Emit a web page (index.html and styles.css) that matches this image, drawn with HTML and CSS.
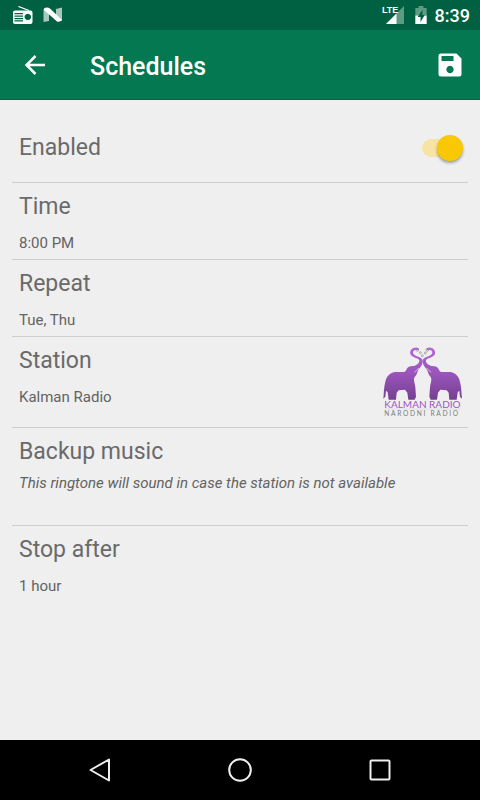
FILE: index.html
```html
<!DOCTYPE html>
<html lang="en">
<head>
<meta charset="utf-8">
<meta name="viewport" content="width=device-width, initial-scale=1">
<title>Schedules</title>
<link rel="stylesheet" href="styles.css">
</head>
<body>
<div class="status">
  <svg class="radio-icon" width="20" height="18" viewBox="0 0 20 18" aria-hidden="true">
    <path d="M5.500 .5 16 4.500" stroke="#fff" stroke-width="1.300"/>
    <path fill="#fff" fill-rule="evenodd" d="M2 4.500h15.500a2 2 0 0 1 2 2V16a2 2 0 0 1-2 2H2a2 2 0 0 1-2-2V6.500a2 2 0 0 1 2-2ZM1.500 7v1.200h8.500V7ZM1.500 9.500v1.200h8.500V9.500ZM1.500 12v1.200h8.500V12ZM1.500 14.300v1.200h8.500v-1.200ZM14.800 7.700a3.200 3.200 0 1 0 .01 0Z"/>
  </svg>
  <svg width="20" height="16" viewBox="0 0 20 16" aria-hidden="true">
    <path fill="#fff" opacity=".65" d="M.5 2 6 4v10L.5 15ZM13 2l6-1.500V14l-6-2Z"/>
    <path fill="#fff" d="M1 1.500Q4-.5 7 1.500L19 13q-2 2.500-5 1.500L1 3Z"/>
  </svg>
  <span class="spacer"></span>
  <svg width="24" height="20" viewBox="0 0 24 20" aria-hidden="true">
    <path fill="#5d9b83" d="M23 1v18H5Z"/>
    <path fill="#fff" d="M15.500 8.500V19H5Z"/>
    <path fill="#006142" d="M0 0h13v9H0Z"/>
    <text class="lte" x="1" y="8">LTE</text>
  </svg>
  <svg class="battery-icon" width="12" height="18" viewBox="0 0 12 19" aria-hidden="true">
    <path fill="#5d9b83" d="M3.500 0h5v2H12v8H0V2h3.500Z"/>
    <path fill="#fff" d="M0 10h12v9H0Z"/>
    <path fill="#006142" d="M7.500 4 2.500 11.500h3V17l4.500-7.500H7.500Z"/>
  </svg>
  <span class="clock">8:39</span>
</div>
<header class="bar">
  <button class="icon-button" aria-label="Back">
    <svg width="20" height="20" viewBox="0 0 20 20"><path d="M20 10H2M10.500 1 1.500 10l9 9" fill="none" stroke="#fff" stroke-width="2.500"/></svg>
  </button>
  <h1>Schedules</h1>
  <button class="icon-button" aria-label="Save">
    <svg width="24" height="24" viewBox="0 0 24 24"><path fill="#fff" fill-rule="evenodd" d="M3 .5h15.500L23.500 5.500V21a2.500 2.500 0 0 1-2.500 2.500H3A2.500 2.500 0 0 1 .5 21V3A2.500 2.500 0 0 1 3 .5ZM3.500 3v5h12V3ZM12 12.800a3.700 3.700 0 1 0 .01 0Z"/></svg>
  </button>
</header>
<main>
  <section class="row enabled">
    <label class="title" for="enabled">Enabled</label>
    <input class="switch" id="enabled" type="checkbox" role="switch" checked>
  </section>
  <section class="row">
    <div><h2 class="title">Time</h2><p>8:00 PM</p></div>
  </section>
  <section class="row">
    <div><h2 class="title">Repeat</h2><p>Tue, Thu</p></div>
  </section>
  <section class="row station">
    <div><h2 class="title">Station</h2><p>Kalman Radio</p></div>
    <svg class="logo" width="80" height="72" viewBox="21 18 240 216" role="img" aria-label="Kalman Radio, Narodni Radio">
      <defs>
        <linearGradient id="skin" x1="0" y1="0" x2="0" y2="1">
          <stop offset="0" stop-color="#b565d8"/><stop offset=".5" stop-color="#9a55ba"/><stop offset="1" stop-color="#744091"/>
        </linearGradient>
        <g id="elephant">
          <path fill="url(#skin)" d="M22 176C24 162 23 142 28 126C31 108 43 98 58 96C68 95 76 97 84 96C91 94 91 84 99 80C106 77 113 80 119 76C127 72 131 67 130 61C128 54 108 53 103 42C100 28 114 18 128 24L128 31C116 27 108 33 112 41C117 50 138 49 140 62C141 77 128 84 125 94C123 102 121 107 116 111C111 119 117 130 118 142L120 170L116 179H97L94 158L87 149L68 151L62 158L60 179H38L35 157L30 152L28 170Z"/>
          <path fill="none" stroke="#efefef" stroke-width="2" d="M115 97Q123 91 128 84"/>
        </g>
      </defs>
      <use href="#elephant"/>
      <use href="#elephant" transform="matrix(-1 0 0 1 280 0)"/>
      <g fill="none" stroke="#8d8d8d" stroke-width="2"><circle cx="124" cy="30" r="4"/><circle cx="133" cy="38" r="3"/><circle cx="139" cy="47" r="3"/><circle cx="148" cy="39" r="3"/><circle cx="154" cy="30" r="4"/></g>
      <text class="brand" x="25" y="203">KALMAN RADIO</text>
      <path d="M26 207H253" stroke="#c7bccd" stroke-width="1"/>
      <text class="tagline" x="25" y="228">NARODNI RADIO</text>
    </svg>
  </section>
  <section class="row backup">
    <div><h2 class="title">Backup music</h2><p><em>This ringtone will sound in case the station is not available</em></p></div>
  </section>
  <section class="row">
    <div><h2 class="title">Stop after</h2><p>1 hour</p></div>
  </section>
</main>
<nav class="nav" aria-label="System">
  <button aria-label="Back"><svg width="24" height="24" viewBox="0 0 24 24"><path d="M21 1.500v21L2.500 12Z"/></svg></button>
  <button aria-label="Home"><svg width="24" height="24" viewBox="0 0 24 24"><circle cx="12" cy="12" r="10.800"/></svg></button>
  <button aria-label="Recents"><svg width="24" height="24" viewBox="0 0 24 24"><rect x="2.500" y="2.500" width="19" height="19" rx="1"/></svg></button>
</nav>
</body>
</html>
```
FILE: styles.css
```css
* { box-sizing: border-box; }
body {
  margin: 0;
  min-height: 100vh;
  display: flex;
  flex-direction: column;
  background: #efefef;
  color: #6a6a6a;
  font-family: Roboto, "Liberation Sans", sans-serif;
}
h1, h2, p { margin: 0; font-weight: 400; }
button { border: 0; padding: 0; background: none; display: grid; place-items: center; }
svg { display: block; }
.status {
  height: 30px;
  padding: 0 10px 0 13px;
  display: flex;
  align-items: center;
  gap: 10px;
  background: #006142;
  color: #fff;
}
.spacer { flex: 1; }
.clock { font-size: 18px; font-weight: 500; line-height: 32px; padding-top: 2px; }
.battery-icon { margin-right: -2px; }
.lte { font: 700 9px "Liberation Sans Narrow", "Liberation Sans", sans-serif; fill: #fff; }
.bar {
  height: 70px;
  padding: 0 12px 0 17px;
  display: flex;
  align-items: center;
  background: #047850;
  border-bottom: 1px solid #036644;
  color: #fff;
}
.bar h1 { flex: 1; margin-left: 37px; font-size: 25px; font-weight: 500; line-height: 32px; padding-top: 4px; }
.icon-button { width: 36px; height: 48px; }
main { flex: 1; padding: 14px 12px 0; }
.row {
  min-height: 77px;
  padding: 8px 5px 0 7px;
  display: flex;
  justify-content: space-between;
  border-bottom: 1px solid #cecece;
}
.row:last-child { border-bottom: 0; }
.title { display: block; font-size: 23px; line-height: 32px; }
.row p { margin-top: 10px; font-size: 15px; line-height: 20px; color: #636363; }
.enabled { min-height: 69px; padding-top: 0; align-items: center; }
.station { min-height: 91px; }
.backup { min-height: 98px; }
.backup p { margin-top: 5px; }
.logo { margin-top: 1px; }
.brand { font: 30px Lato, sans-serif; fill: #a052c4; }
.tagline { font: 20px Lato, sans-serif; letter-spacing: 5px; fill: #7c7c7c; }
.switch {
  appearance: none;
  width: 41px;
  height: 18px;
  margin: 0;
  border-radius: 9px;
  background: #f7e4a5;
  display: flex;
  justify-content: flex-end;
  align-items: center;
}
.switch::before {
  content: "";
  width: 26px;
  height: 26px;
  flex: none;
  border-radius: 50%;
  background: #f9c804;
  box-shadow: 0 2px 3px rgb(0 0 0 / 35%);
}
.nav {
  height: 60px;
  display: flex;
  justify-content: center;
  gap: 80px;
  background: #000;
}
.nav button { width: 60px; height: 60px; }
.nav svg { fill: none; stroke: #eee; stroke-width: 2; stroke-linejoin: round; }
```
